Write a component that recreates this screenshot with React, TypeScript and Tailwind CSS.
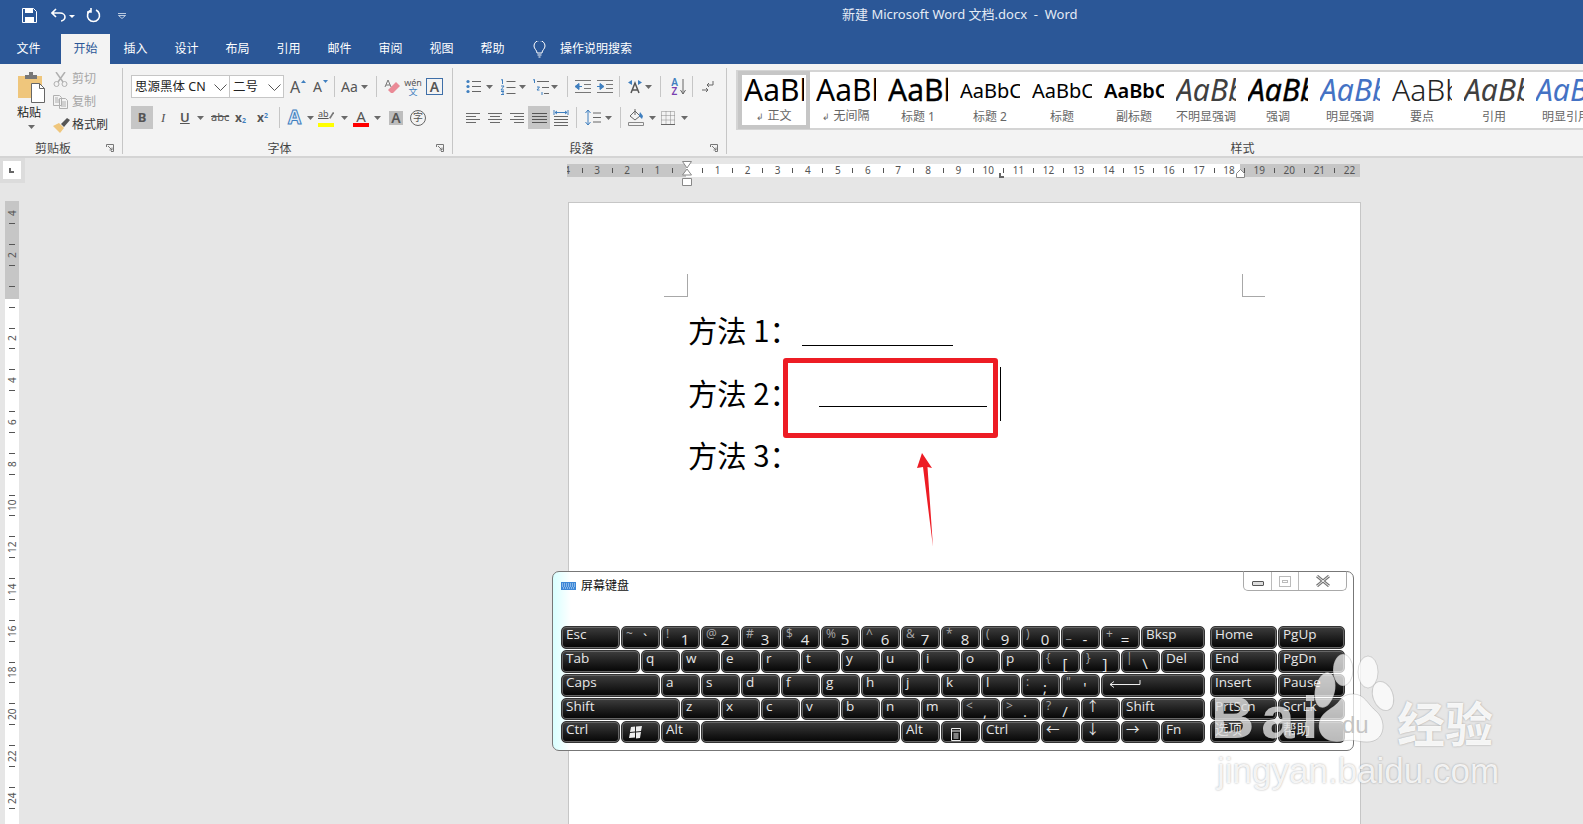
import type { ReactNode } from "react"

const Caret = ({ className = "" }: { className?: string }) => (
  <svg viewBox="0 0 7 4" className={"w-[7px] h-[4px] shrink-0 " + className}>
    <path d="M0 0h7L3.5 4z" fill="#6a6a6a" />
  </svg>
)

const Sep = ({ className = "" }: { className?: string }) => (
  <div className={"w-px h-[21px] bg-[#c6c6c6] shrink-0 " + className} />
)

const Launcher = () => (
  <div className="w-[16px] flex justify-start shrink-0">
    <svg viewBox="0 0 8 8" className="w-[8px] h-[8px]">
      <path d="M.5 3V.5H7.5V7.5H5M2 2l4 4M6 3.5V6H3.5" fill="none" stroke="#777" />
    </svg>
  </div>
)

function Group({ label, width, launcher = true, children }: { label: string; width: string; launcher?: boolean; children: ReactNode }) {
  return (
    <div className={"h-[86px] flex flex-col shrink-0 border-r border-[#c6c6c6] " + width}>
      <div className="flex-1 min-h-0">{children}</div>
      <div className="h-[18px] pt-[8px] flex items-start">
        <span className="flex-1 text-center text-[12px] leading-[10px] text-[#444]">{label}</span>
        {launcher && <Launcher />}
      </div>
    </div>
  )
}

// horizontal line stack used by the paragraph icons
function Lines({ rows, w = 16, h = 14, color = "#6a6a6a", className = "" }: { rows: [number, number][]; w?: number; h?: number; color?: string; className?: string }) {
  const step = h / rows.length
  return (
    <svg width={w} height={h} viewBox={`0 0 ${w} ${h}`} className={"shrink-0 " + className}>
      {rows.map((r, i) => (
        <path key={i} d={`M${r[0]} ${i * step + step / 2}H${r[1]}`} stroke={color} strokeWidth="1" />
      ))}
    </svg>
  )
}

const BulletIcon = ({ className = "" }: { className?: string }) => (
  <svg width="15" height="15" viewBox="0 0 15 15" className={"shrink-0 " + className}>
    <circle cx="2" cy="2.5" r="1.6" fill="#3f7fbf" /><circle cx="2" cy="7.5" r="1.6" fill="#3f7fbf" /><circle cx="2" cy="12.5" r="1.6" fill="#3f7fbf" />
    <path d="M6 2.5h9M6 7.5h9M6 12.5h9" stroke="#666" />
  </svg>
)

const NumIcon = ({ className = "" }: { className?: string }) => (
  <svg width="16" height="16" viewBox="0 0 16 16" className={"shrink-0 " + className}>
    <path d="M1 1l1.5-.5V5M1 7h3L1 11h3M1 12.5h3M2 14h2M1 15.5h3" fill="none" stroke="#3f7fbf" />
    <path d="M6.5 2.5h9M6.5 8.5h9M6.5 14.5h9" stroke="#666" />
  </svg>
)

const MultiIcon = ({ className = "" }: { className?: string }) => (
  <svg width="16" height="16" viewBox="0 0 16 16" className={"shrink-0 " + className}>
    <path d="M0 1l1.5-.5V4M4 8h2.5L4 11h2.5M9 13v3" fill="none" stroke="#3f7fbf" />
    <path d="M4 2.5h12M9 8.5h7M11 14.5h5" stroke="#666" />
  </svg>
)

const IndentIcon = ({ flip = false, className = "" }: { flip?: boolean; className?: string }) => (
  <svg width="16" height="13" viewBox="0 0 16 13" className={"shrink-0 " + className}>
    <path d="M0 .5h16M0 12.5h16M9 4.5h7M9 8.5h7" stroke="#777" />
    <path d={flip ? "M0 6.5h5M3 3.5l4 3-4 3z" : "M7 6.5H2M4 3.5l-4 3 4 3z"} fill="#3f7fbf" stroke="#3f7fbf" />
  </svg>
)

const LINE_L: [number, number][] = [[0, 14], [0, 10], [0, 14], [0, 10]]
const LINE_C: [number, number][] = [[0, 14], [2, 12], [0, 14], [2, 12]]
const LINE_R: [number, number][] = [[0, 14], [4, 14], [0, 14], [4, 14]]
const LINE_J: [number, number][] = [[0, 15], [0, 15], [0, 15], [0, 15]]

const StylesData = [
  { t: "正文", mark: true, cls: "text-[30px] text-black" },
  { t: "无间隔", mark: true, cls: "text-[30px] text-black" },
  { t: "标题 1", cls: "text-[30px] text-black [-webkit-text-stroke:0.3px_black]" },
  { t: "标题 2", cls: "text-[20px] pt-[1px] text-black" },
  { t: "标题", cls: "text-[20px] pt-[1px] text-black" },
  { t: "副标题", cls: "text-[20px] pt-[1px] text-black font-semibold" },
  { t: "不明显强调", cls: "text-[30px] italic text-[#404040]" },
  { t: "强调", cls: "text-[30px] italic text-black [-webkit-text-stroke:0.4px_black]" },
  { t: "明显强调", cls: "text-[30px] italic text-[#4472c4]" },
  { t: "要点", cls: "text-[30px] text-[#222] font-light" },
  { t: "引用", cls: "text-[30px] italic text-[#404040]" },
  { t: "明显引用", cls: "text-[30px] italic text-[#4472c4]" },
]

function Ribbon() {
  return (
    <div className="h-[94px] shrink-0 pt-[4px] flex bg-[#f3f3f3] border-b-2 border-[#d4d4d4] overflow-hidden">
      <Group label="剪贴板" width="w-[123px]">
        <div className="flex">
          <div className="ml-[15px] w-[32px] flex flex-col items-center">
            <svg width="30" height="31" viewBox="0 0 30 31" className="mt-[4px]">
              <path d="M2 4h24v22H2z" fill="#efc67c" />
              <path d="M9 3h4V0h4v3h4v4H9z" fill="#777" />
              <path d="M15.5 11.5h8l5 5v14h-13z" fill="#fff" stroke="#666" />
              <path d="M23.5 11.5v5h5" fill="none" stroke="#666" />
            </svg>
            <span className="text-[12px] leading-[16px] text-[#222] mt-[2px] mr-[4px] whitespace-nowrap">粘贴</span>
            <Caret className="mt-[4px]" />
          </div>
          <div className="ml-[6px] pt-[1px] flex flex-col gap-[3px] text-[12px] whitespace-nowrap">
            <div className="h-[20px] flex items-center text-[#a6a6a6]">
              <svg width="15" height="15" viewBox="0 0 15 15" className="mr-[4px]">
                <path d="M3 0l7 10M12 0L5 10" stroke="#b0b0b0" strokeWidth="1.5" />
                <circle cx="3.5" cy="12" r="2.5" fill="none" stroke="#b0b0b0" /><circle cx="11.5" cy="12" r="2.5" fill="none" stroke="#b0b0b0" />
              </svg>
              剪切
            </div>
            <div className="h-[20px] flex items-center text-[#a6a6a6]">
              <svg width="15" height="14" viewBox="0 0 15 14" className="mr-[4px]">
                <path d="M.5.5h6l2 2v8H.5zM6.5 3.5h6l2 2v8h-8zM8 7h5M8 9h5M8 11h5M2 3h3M2 5h4M2 7h4" fill="none" stroke="#b0b0b0" />
              </svg>
              复制
            </div>
            <div className="h-[20px] flex items-center text-[#333]">
              <svg width="17" height="15" viewBox="0 0 17 15" className="mr-[2px]">
                <path d="M0 8l6-3 5 5-4 5z" fill="#efc67c" />
                <path d="M8 6l6-6 3 2-6 7z" fill="#555" />
              </svg>
              格式刷
            </div>
          </div>
        </div>
      </Group>

      <Group label="字体" width="w-[330px]">
        <div className="pl-[8px] pt-[7px]">
          <div className="flex items-center h-[23px] whitespace-nowrap">
            <div className="w-[99px] h-[23px] bg-white border border-[#c6c6c6] flex items-center pl-[3px] pt-[1px] text-[12.5px] text-[#222] shrink-0">
              <span className="flex-1">思源黑体 CN</span>
              <svg width="13" height="7" viewBox="0 0 13 7" className="mr-[2px]"><path d="M.5.5l6 6 6-6" fill="none" stroke="#555" /></svg>
            </div>
            <div className="-ml-px w-[55px] h-[23px] bg-white border border-[#c6c6c6] flex items-center pl-[3px] pt-[1px] text-[12.5px] text-[#222] shrink-0">
              <span className="flex-1">二号</span>
              <svg width="13" height="7" viewBox="0 0 13 7" className="mr-[2px]"><path d="M.5.5l6 6 6-6" fill="none" stroke="#555" /></svg>
            </div>
            <span className="ml-[6px] text-[16px] text-[#555] w-[11px]">A</span>
            <svg width="5" height="3" viewBox="0 0 5 3" className="mb-[10px]"><path d="M0 3l2.5-3 2.5 3z" fill="#3f7fbf" /></svg>
            <span className="ml-[7px] text-[14px] text-[#555] w-[10px]">A</span>
            <svg width="5" height="3" viewBox="0 0 5 3" className="mb-[10px]"><path d="M0 0h5L2.5 3z" fill="#3f7fbf" /></svg>
            <Sep className="ml-[6px]" />
            <span className="ml-[6px] text-[14px] text-[#555] w-[17px]">Aa</span>
            <Caret className="ml-[3px]" />
            <Sep className="ml-[8px]" />
            <svg width="16" height="16" viewBox="0 0 16 16" className="ml-[7px] shrink-0">
              <path d="M4 11l8-8 4 4-7 7H7z" fill="#ea8a96" />
              <path d="M1 8l3-7 3 7M2 6h4" fill="none" stroke="#777" />
            </svg>
            <div className="ml-[5px] w-[16px] flex flex-col items-center leading-none">
              <span className="text-[9px] text-[#555]">wén</span>
              <span className="text-[9px] text-[#3f7fbf]">文</span>
            </div>
            <div className="ml-[5px] w-[17px] h-[17px] border border-[#3f6fa8] flex items-center justify-center text-[14px] font-semibold text-[#555]">A</div>
          </div>
          <div className="flex items-center h-[23px] mt-[8px] whitespace-nowrap text-[#555]">
            <div className="w-[22px] h-[23px] bg-[#c6c6c6] flex items-center justify-center text-[13px] font-bold">B</div>
            <span className="ml-[8px] w-[10px] text-[13px] italic font-['Liberation_Serif',serif]">I</span>
            <span className="ml-[9px] w-[12px] text-[13px] font-semibold underline">U</span>
            <Caret className="ml-[5px]" />
            <span className="ml-[7px] w-[17px] text-[11px] line-through">abc</span>
            <span className="ml-[7px] w-[13px] text-[12px] font-bold">x<sub className="text-[7px] text-[#3f7fbf]">2</sub></span>
            <span className="ml-[9px] w-[13px] text-[12px] font-bold">x<sup className="text-[7px] text-[#3f7fbf]">2</sup></span>
            <Sep className="ml-[9px]" />
            <span className="ml-[8px] w-[15px] text-[19px] leading-none font-bold text-[#dfeaf6] [-webkit-text-stroke:1px_#3f7fbf]">A</span>
            <Caret className="ml-[4px]" />
            <div className="ml-[4px] w-[16px] h-[18px] flex flex-col shrink-0">
              <div className="flex items-start h-[13px]">
                <span className="text-[9px] leading-[10px] underline">ab</span>
                <svg width="7" height="10" viewBox="0 0 7 10" className="mt-[1px]"><path d="M0 9l5-8 2 1-5 8z" fill="#777" /></svg>
              </div>
              <div className="w-[16px] h-[4px] bg-[#ffff00] mt-[1px]" />
            </div>
            <Caret className="ml-[7px]" />
            <div className="ml-[5px] w-[16px] flex flex-col items-center shrink-0">
              <span className="text-[15px] leading-[14px]">A</span>
              <div className="w-[16px] h-[4px] bg-[#ff0000]" />
            </div>
            <Caret className="ml-[5px]" />
            <div className="ml-[8px] w-[14px] h-[14px] bg-[#bdbdbd] flex items-center justify-center text-[14px] font-semibold shrink-0">A</div>
            <div className="ml-[7px] w-[16px] h-[16px] rounded-full border border-[#666] flex items-center justify-center text-[10px] shrink-0">字</div>
          </div>
        </div>
      </Group>

      <Group label="段落" width="w-[274px]">
        <div className="pl-[13px] pt-[7px]">
          <div className="flex items-center h-[23px]">
            <BulletIcon />
            <Caret className="ml-[5px]" />
            <NumIcon className="ml-[7px]" />
            <Caret className="ml-[3px]" />
            <MultiIcon className="ml-[7px]" />
            <Caret className="ml-[2px]" />
            <Sep className="ml-[9px]" />
            <IndentIcon className="ml-[7px]" />
            <IndentIcon flip className="ml-[6px]" />
            <Sep className="ml-[6px]" />
            <svg width="16" height="15" viewBox="0 0 16 15" className="ml-[7px] shrink-0">
              <path d="M4 14L8 4l4 10M5.5 11h5" fill="none" stroke="#555" strokeWidth="1.5" />
              <path d="M5 1L1 3.5 5 6zM11 1l4 2.5L11 6z" fill="#3f7fbf" />
            </svg>
            <Caret className="ml-[2px]" />
            <Sep className="ml-[8px]" />
            <div className="ml-[9px] w-[9px] flex flex-col items-center leading-[9px] text-[10px] font-semibold">
              <span className="text-[#3f7fbf]">A</span>
              <span className="text-[#7a3fb0]">Z</span>
            </div>
            <svg width="6" height="16" viewBox="0 0 6 16" className="ml-[1px]"><path d="M3 0v15M.5 11L3 15l2.5-4" fill="none" stroke="#666" /></svg>
            <Sep className="ml-[6px]" />
            <svg width="12" height="13" viewBox="0 0 12 13" className="ml-[9px]">
              <path d="M11 1v4H5M7 3L5 5l2 2" fill="none" stroke="#666" />
              <path d="M0 10h6M4 8l2 2-2 2" fill="none" stroke="#666" />
            </svg>
          </div>
          <div className="flex items-center h-[23px] mt-[8px]">
            <Lines rows={LINE_L} w={14} h={12} />
            <Lines rows={LINE_C} w={14} h={12} className="ml-[8px]" />
            <Lines rows={LINE_R} w={14} h={12} className="ml-[8px]" />
            <div className="ml-[4px] w-[22px] h-[23px] bg-[#c6c6c6] flex items-center justify-center">
              <Lines rows={LINE_J} w={15} h={12} color="#555" />
            </div>
            <svg width="16" height="16" viewBox="0 0 16 16" className="ml-[3px] shrink-0">
              <path d="M1 0v5M15 0v5M2 2.5h12M4 1L2 2.5 4 4M12 1l2 1.5L12 4" fill="none" stroke="#3f7fbf" />
              <path d="M1 6.5h14M1 9.5h14M1 12.5h14M1 15.5h14" stroke="#666" />
            </svg>
            <Sep className="ml-[7px]" />
            <svg width="16" height="17" viewBox="0 0 16 17" className="ml-[8px] shrink-0">
              <path d="M3 1v15M.5 4L3 1l2.5 3M.5 13L3 16l2.5-3" fill="none" stroke="#3f7fbf" />
              <path d="M8 4h8M8 8.5h8M8 13h8" stroke="#666" />
            </svg>
            <Caret className="ml-[4px]" />
            <Sep className="ml-[8px]" />
            <svg width="17" height="17" viewBox="0 0 17 17" className="ml-[7px] shrink-0">
              <path d="M2 7l5-5 5 5-5 4zM7 0v6" fill="none" stroke="#666" />
              <path d="M12 3l3 4-1 3-3-3z" fill="#3f7fbf" />
              <path d="M.5 13.5h15v3H.5z" fill="none" stroke="#888" />
            </svg>
            <Caret className="ml-[4px]" />
            <svg width="14" height="14" viewBox="0 0 14 14" className="ml-[5px] shrink-0">
              <path d="M.5.5h13v13H.5zM.5 4.5h13M.5 9h13M5 .5v13M9.5.5v13" fill="none" stroke="#888" strokeDasharray="1 1" />
              <path d="M0 13.5h14" stroke="#666" />
            </svg>
            <Caret className="ml-[6px]" />
          </div>
        </div>
      </Group>

      <Group label="样式" width="w-[1032px]" launcher={false}>
        <div className="ml-[9px] mt-[2px] w-[1000px] h-[60px] bg-white border-y-2 border-l-2 border-[#d4d4d4] flex">
          {StylesData.map((s, i) => (
            <div
              key={s.t}
              className={`w-[72px] -mt-px h-[58px] shrink-0 flex flex-col items-center ${i === 0 ? "border-4 border-[#c6c6c6]" : "border-4 border-transparent"}`}
            >
              <div className="w-[60px] h-[32px] overflow-hidden whitespace-nowrap text-left">
                <div className={"leading-[29px] " + s.cls}>AaBbCcDdEe</div>
              </div>
              <div className="text-[12px] leading-[16px] text-[#666] mt-[3px] whitespace-nowrap">
                {s.mark && <span className="text-[9px] mr-[3px]">↲</span>}
                {s.t}
              </div>
            </div>
          ))}
        </div>
      </Group>
    </div>
  )
}

const H_NUMS = ["4", "3", "2", "1", "", "1", "2", "3", "4", "5", "6", "7", "8", "9", "10", "11", "12", "13", "14", "15", "16", "17", "18", "19", "20", "21", "22"]
const V_NUMS = ["4", "2", "", "2", "4", "6", "8", "10", "12", "14", "16", "18", "20", "22", "24"]

function HRuler() {
  return (
    <div className="relative ml-[542px] w-[793px] h-[13px] bg-[linear-gradient(90deg,#c6c6c6_119px,#fff_119px,#fff_673px,#c6c6c6_673px)]">
      <div className="w-full h-full overflow-hidden">
        <div className="flex -ml-[7.5px] h-full">
          {H_NUMS.map((n, i) => (
            <div key={i} className="flex w-[30.1px] shrink-0 h-full">
              <div className="w-[15.05px] flex items-center justify-center text-[10px] text-[#555]">{n}</div>
              <div className="w-[15.05px] flex items-center justify-center">
                <div className="w-px h-[5px] bg-[#555]" />
              </div>
            </div>
          ))}
        </div>
      </div>
      {/* indent markers */}
      <svg width="12" height="25" viewBox="0 0 12 25" className="absolute left-[114px] -top-[3px]">
        <path d="M1.5.5h9L6 7z" fill="#fff" stroke="#888" />
        <path d="M6 8l4.5 6h-9zM1.5 17.5h9v7h-9z" fill="#fff" stroke="#888" />
      </svg>
      <svg width="9" height="9" viewBox="0 0 9 9" className="absolute left-[669px] top-[5px]">
        <path d="M4.5.5l4 4v4h-8v-4z" fill="#fff" stroke="#888" />
      </svg>
      <div className="absolute left-[432px] top-[9px] w-[5px] h-[5px] border-l-2 border-b-2 border-[#666]" />
    </div>
  )
}

function VRuler() {
  return (
    <div className="ml-[5px] w-[14px] shrink-0 h-full overflow-hidden bg-[linear-gradient(180deg,#c6c6c6_98px,#fff_98px)] pt-[7px]">
      {V_NUMS.map((n, i) => (
        <div key={i}>
          <div className="h-[10.45px] flex items-center justify-center text-[10px] text-[#555] -rotate-90">{n}</div>
          <div className="h-[10.45px] flex items-center justify-center"><div className="w-[6px] h-px bg-[#555]" /></div>
          <div className="h-[10.45px]" />
          <div className="h-[10.45px] flex items-center justify-center"><div className="w-[6px] h-px bg-[#555]" /></div>
        </div>
      ))}
    </div>
  )
}

function Page() {
  return (
    <div className="relative ml-[549px] w-[793px] h-full bg-white border-t border-x border-[#c6c6c6] px-[95px] pt-[71px] text-black">
      <div className="flex justify-between">
        <div className="w-[24px] h-[23px] border-r border-b border-[#a8a8a8]" />
        <div className="w-[23px] h-[23px] border-l border-b border-[#a8a8a8]" />
      </div>
      <div className="ml-[24px] mt-[3px] text-[29.3px] font-['Noto_Sans_CJK_SC','Noto_Sans',sans-serif] font-normal whitespace-nowrap">
        <div className="flex items-center h-[62.5px]">
          <span className="w-[114px] shrink-0 pb-[2px]">方法 1：</span>
          <span className="self-start mt-[45px] w-[151px] h-px bg-black" />
        </div>
        <div className="flex items-center h-[62.5px]">
          <span className="w-[131px] shrink-0 pb-[2px]">方法 2：</span>
          <span className="self-start mt-[43px] w-[168px] h-px bg-black" />
          <span className="ml-[13px] w-px h-[54px] bg-black" />
        </div>
        <div className="flex items-center h-[62.5px]">
          <span className="pb-[2px]">方法 3：</span>
        </div>
      </div>
      {/* annotation */}
      <div className="absolute left-[214px] top-[155px] w-[215px] h-[80px] border-[5px] border-[#ed1c24] rounded-[3px]" />
      <svg width="22" height="100" viewBox="0 0 22 100" className="absolute left-[345px] top-[247px]">
        <path d="M8 3l10 15-4.5-1L19 97 9 17l-6 1z" fill="#ed1c24" />
      </svg>
    </div>
  )
}

type K = { l?: string; s?: string; w?: string; icon?: ReactNode }

const WinLogo = (
  <svg width="14" height="13" viewBox="0 0 14 13" className="mt-[4px] ml-[3px]">
    <path d="M2 1l4-.5v5l-5 .5zM7 .5l6-.5-1 5-5 .5zM1 7l5-.5v5l-6 .5zM7 6.5l5-.5-1 6-4 .5z" fill="#eee" />
  </svg>
)
const MenuIcon = (
  <svg width="10" height="13" viewBox="0 0 10 13" className="mt-[6px] ml-[5px]">
    <path d="M.5.5h9v12h-9zM.5 3h9M2.5 6h5M2.5 8h5M2.5 10h5" fill="none" stroke="#eee" />
  </svg>
)
const EnterIcon = (
  <svg width="32" height="9" viewBox="0 0 32 9" className="mt-[5px] ml-[3px]">
    <path d="M31 0v4.5H1M5 1.5L1 4.5l4 3" fill="none" stroke="#eee" />
  </svg>
)

const ROWS: K[][] = [
  [{ l: "Esc", w: "w-[59px]" }, { s: "~", l: "`" }, { s: "!", l: "1" }, { s: "@", l: "2" }, { s: "#", l: "3" }, { s: "$", l: "4" }, { s: "%", l: "5" }, { s: "^", l: "6" }, { s: "&", l: "7" }, { s: "*", l: "8" }, { s: "(", l: "9" }, { s: ")", l: "0" }, { s: "_", l: "-" }, { s: "+", l: "=" }, { l: "Bksp", w: "w-[64px]" }],
  [{ l: "Tab", w: "w-[79px]" }, { l: "q" }, { l: "w" }, { l: "e" }, { l: "r" }, { l: "t" }, { l: "y" }, { l: "u" }, { l: "i" }, { l: "o" }, { l: "p" }, { s: "{", l: "[" }, { s: "}", l: "]" }, { s: "|", l: "\\" }, { l: "Del", w: "w-[44px]" }],
  [{ l: "Caps", w: "w-[99px]" }, { l: "a" }, { l: "s" }, { l: "d" }, { l: "f" }, { l: "g" }, { l: "h" }, { l: "j" }, { l: "k" }, { l: "l" }, { s: ":", l: ";" }, { s: '"', l: "'" }, { icon: EnterIcon, w: "w-[104px]" }],
  [{ l: "Shift", w: "w-[119px]" }, { l: "z" }, { l: "x" }, { l: "c" }, { l: "v" }, { l: "b" }, { l: "n" }, { l: "m" }, { s: "<", l: "," }, { s: ">", l: "." }, { s: "?", l: "/" }, { l: "↑" }, { l: "Shift", w: "w-[84px]" }],
  [{ l: "Ctrl", w: "w-[59px]" }, { icon: WinLogo }, { l: "Alt" }, { w: "w-[199px]" }, { l: "Alt" }, { icon: MenuIcon }, { l: "Ctrl", w: "w-[59px]" }, { l: "←" }, { l: "↓" }, { l: "→" }, { l: "Fn", w: "w-[44px]" }],
]
const SIDE = [["Home", "PgUp"], ["End", "PgDn"], ["Insert", "Pause"], ["PrtScn", "ScrLk"], ["选项", "帮助"]]
const ROW_H = ["h-[23px]", "h-[23px]", "h-[23px]", "h-[22px]", "h-[22px]"]

function Key({ k, h }: { k: K; h: string }) {
  return (
    <div className={`${k.w ?? "w-[39px]"} ${h} shrink-0 rounded-[5px] border border-[#333] shadow-[inset_0_0_0_1px_#666] bg-gradient-to-b from-[#3e3e3e] to-[#060606] flex pl-[4px] text-[#e8e8e8] overflow-hidden whitespace-nowrap`}>
      {k.icon}
      {k.s ? (
        <>
          <span className="w-[14px] shrink-0 text-[12px] leading-[14px] text-[#aaa]">{k.s}</span>
          <span className="w-[10px] shrink-0 text-center text-[15px] leading-[16px] mt-[4px]">{k.l}</span>
        </>
      ) : (
        k.l && <span className="text-[13.5px] leading-[15px]">{k.l}</span>
      )}
    </div>
  )
}

function Osk() {
  return (
    <div className="absolute left-[552px] top-[571px] w-[802px] h-[180px] rounded-[7px] border border-[#777] bg-[linear-gradient(90deg,#d8ffff,#fff_18px)] pl-[8px] pt-[54px] font-['Open_Sans','Noto_Sans_CJK_SC',sans-serif]">
      <div className="absolute left-[8px] top-[6px] flex items-center">
        <svg width="15" height="8" viewBox="0 0 15 8" className="mr-[5px]">
          <path d="M0 0h15v8H0z" fill="#3d87d6" />
          <path d="M1 2h13M1 4h13M2 6h11" stroke="#cfe6fb" strokeDasharray="1 1" />
        </svg>
        <span className="text-[12px] text-[#111] leading-[16px]">屏幕键盘</span>
      </div>
      <div className="absolute right-[6px] -top-px h-[20px] flex rounded-b-[5px] border border-t-[#777] border-[#aaa] bg-white">
        <div className="w-[28px] border-r border-[#bbb] flex items-center justify-center">
          <div className="w-[12px] h-[5px] mt-[4px] rounded-[1px] border border-[#555] bg-[#ddd]" />
        </div>
        <div className="w-[27px] border-r border-[#bbb] flex items-center justify-center">
          <div className="w-[12px] h-[11px] border border-[#bbb] flex items-center justify-center"><div className="w-[6px] h-[3px] border border-[#bbb]" /></div>
        </div>
        <div className="w-[47px] flex items-center justify-center">
          <svg width="14" height="12" viewBox="0 0 14 12"><path d="M1 1l12 10M13 1L1 11" stroke="#777" strokeWidth="3" /><path d="M1 1l12 10M13 1L1 11" stroke="#eee" /></svg>
        </div>
      </div>
      <div className="flex">
        <div className="flex flex-col gap-px">
          {ROWS.map((row, i) => (
            <div key={i} className="flex gap-px">
              {row.map((k, j) => <Key key={j} k={k} h={ROW_H[i]} />)}
            </div>
          ))}
        </div>
        <div className="ml-[5px] flex flex-col gap-px">
          {SIDE.map((row, i) => (
            <div key={i} className="flex gap-px">
              {row.map((l) => <Key key={l} k={{ l, w: "w-[67px]" }} h={ROW_H[i]} />)}
            </div>
          ))}
        </div>
      </div>
    </div>
  )
}

function Watermark() {
  const soft = "[text-shadow:0_0_2px_rgba(0,0,0,0.35)]"
  return (
    <div className="absolute left-[1205px] top-[650px] w-[300px] h-[145px] pointer-events-none font-['Liberation_Sans',sans-serif]">
      <span className={"absolute left-[6px] top-[35px] text-[60px] leading-[66px] tracking-[7px] font-bold text-white/70 " + soft}>Bai</span>
      <svg width="90" height="100" viewBox="0 0 90 100" className="absolute left-[108px] top-[2px]">
        <g fill="#fff" fillOpacity="0.72" stroke="#000" strokeOpacity="0.14">
          <ellipse cx="12" cy="38" rx="10" ry="18" transform="rotate(12 12 38)" />
          <ellipse cx="30" cy="18" rx="10" ry="16" />
          <ellipse cx="55" cy="20" rx="10" ry="16" />
          <ellipse cx="70" cy="44" rx="10" ry="15" transform="rotate(-20 70 44)" />
          <path d="M40 42c12 0 14 10 24 18 10 10 8 30-10 30-10 0-14-3-24-1-14 3-26-4-24-18 2-12 14-14 20-22 4-5 8-7 14-7z" />
        </g>
      </svg>
      <span className="absolute left-[137px] top-[60px] text-[24px] leading-[30px] text-[#c4c4c4]">du</span>
      <span className={"absolute left-[192px] top-[45px] text-[48px] leading-[52px] font-bold text-white/90 font-['Noto_Sans_CJK_SC',sans-serif] " + soft}>经验</span>
      <span className={"absolute left-[12px] top-[100px] text-[35px] leading-[42px] text-white/85 " + soft}>jingyan.baidu.com</span>
    </div>
  )
}

export default function App() {
  const tabs = ["插入", "设计", "布局", "引用", "邮件", "审阅", "视图", "帮助"]
  return (
    <div className="relative w-[1583px] h-[824px] overflow-hidden flex flex-col bg-[#e6e6e6] font-['Noto_Sans','Noto_Sans_CJK_SC',sans-serif]">
      {/* Title bar + tabs */}
      <div className="h-[64px] shrink-0 bg-[#2b5797] text-white">
        <div className="h-[34px] flex items-center relative">
          <svg width="15" height="15" viewBox="0 0 15 15" className="ml-[22px] -mt-[4px]">
            <path d="M.5.5h11l3 3v11H.5z" fill="none" stroke="#fff" />
            <path d="M3 1h8v4H3zM3 9h9v5H3z" fill="#fff" />
          </svg>
          <svg width="15" height="14" viewBox="0 0 15 14" className="ml-[14px] -mt-[4px]">
            <path d="M5 1L1 5l4 4M1 5h8c3 0 5 2 5 4s-2 4-4 4" fill="none" stroke="#fff" strokeWidth="1.6" />
          </svg>
          <svg width="6" height="3" viewBox="0 0 6 3" className="ml-[3px] -mt-[2px]"><path d="M0 0h6L3 3z" fill="#fff" /></svg>
          <svg width="15" height="15" viewBox="0 0 15 15" className="ml-[11px] -mt-[4px]">
            <path d="M5 2a6 6 0 1 0 5 0M5 0v4H1" fill="none" stroke="#fff" strokeWidth="1.6" />
          </svg>
          <svg width="8" height="6" viewBox="0 0 8 6" className="ml-[17px] -mt-[2px]"><path d="M0 .5h8M.5 2.5h7L4 5.5z" fill="none" stroke="#dfe7f3" strokeWidth="0.8" /></svg>
          <span className="ml-[716px] -mt-[5px] text-[13px] text-[#e4ebf5] whitespace-pre">新建 Microsoft Word 文档.docx  -  Word</span>
        </div>
        <div className="h-[30px] flex items-center text-[12px] whitespace-nowrap">
          <div className="w-[51px] ml-[3px] text-center">文件</div>
          <div className="ml-[7px] w-[49px] h-full bg-[#f3f3f3] text-[#2b5797] flex items-center justify-center">开始</div>
          <div className="flex">
            {tabs.map((t) => <div key={t} className="w-[51px] text-center">{t}</div>)}
          </div>
          <svg width="13" height="17" viewBox="0 0 13 17" className="ml-[15px]">
            <path d="M4 12c0-3-3-4-3-7a5.5 5.5 0 0 1 11 0c0 3-3 4-3 7zM4.5 14h4M5.5 16h2" fill="none" stroke="#fff" />
          </svg>
          <span className="ml-[14px]">操作说明搜索</span>
        </div>
      </div>

      <Ribbon />

      {/* Ruler row */}
      <div className="h-[43px] shrink-0 flex items-start">
        <div className="w-[25px] h-[25px] shrink-0 bg-[#dcdcdc] pl-[3px] pt-[3px]">
          <div className="w-[18px] h-[18px] bg-white pl-[6px] pt-[7px]">
            <div className="w-[5px] h-[5px] border-l-2 border-b-2 border-[#666]" />
          </div>
        </div>
        <div className="mt-[6px]"><HRuler /></div>
      </div>

      {/* Document */}
      <div className="flex-1 min-h-0 flex">
        <VRuler />
        <div className="pt-[1px] h-full"><Page /></div>
      </div>

      <Osk />
      <Watermark />
    </div>
  )
}
